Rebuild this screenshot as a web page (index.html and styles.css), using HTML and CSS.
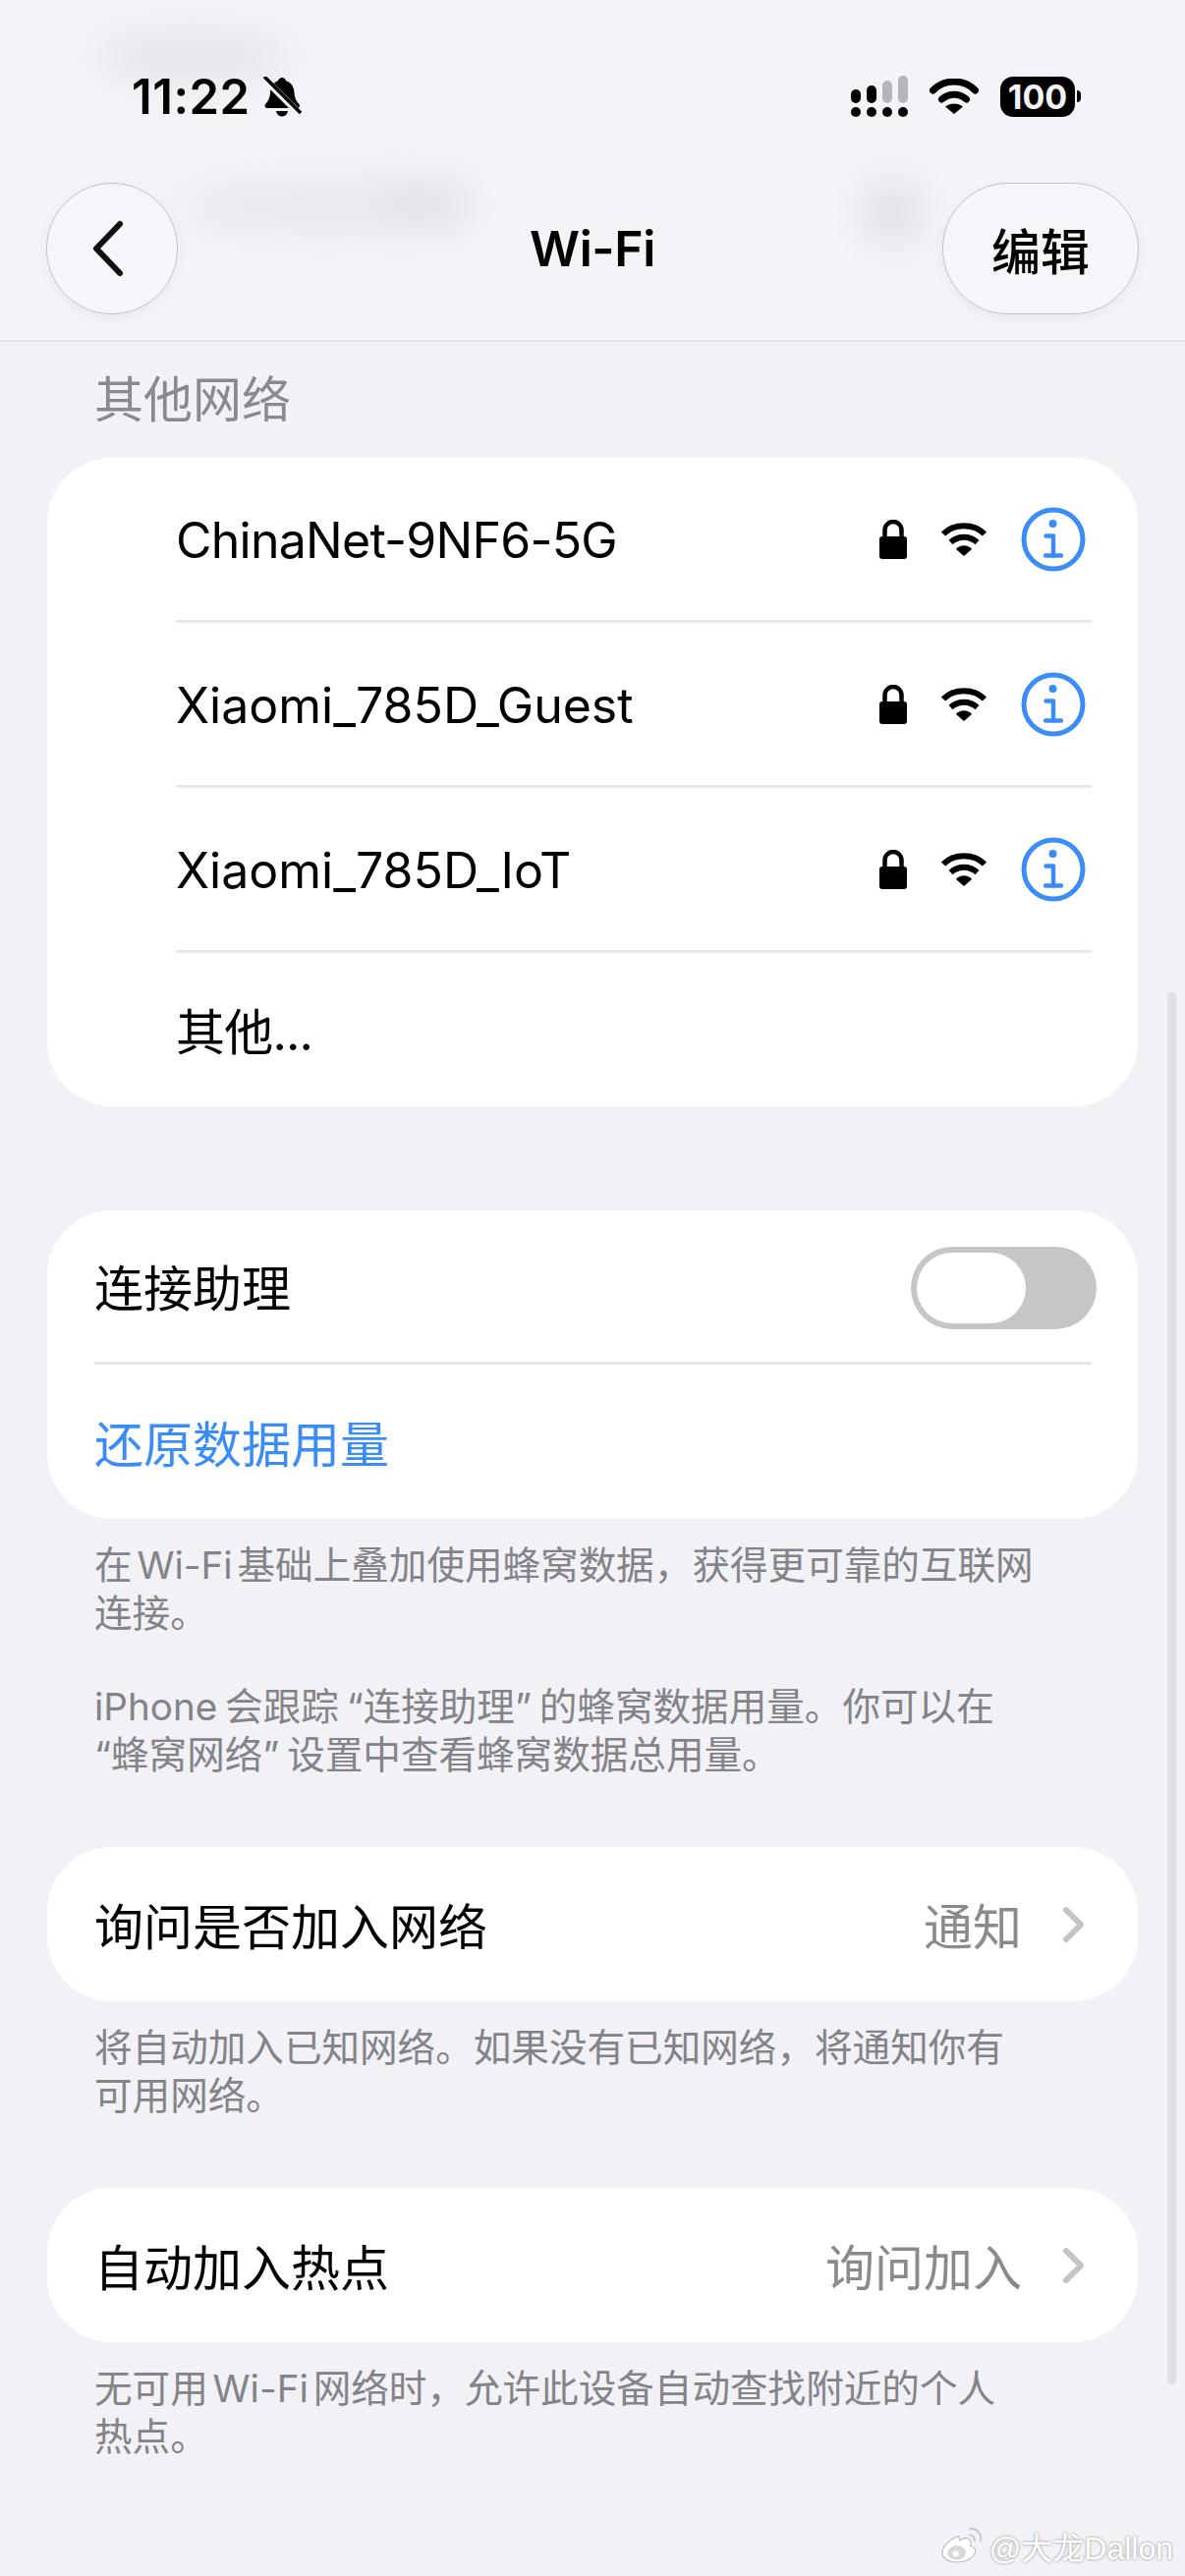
FILE: index.html
```html
<!DOCTYPE html>
<html lang="zh-CN">
<head>
    <meta charset="UTF-8">
    <meta name="viewport" content="width=device-width, initial-scale=1.0">
    <title>Wi-Fi</title>
    <link rel="stylesheet" href="styles.css">
</head>
<body>
    <div class="page">
        <header class="top-bar">
            <div class="blur blur-time"></div>
            <div class="blur blur-nav-a"></div>
            <div class="blur blur-nav-b"></div>
            <div class="blur blur-nav-c"></div>

            <div class="status-bar">
                <div class="status-left">
                    <span class="clock">11:22</span>
                    <svg class="bell" viewBox="0 0 40 42">
                        <path d="M20 1c2 0 3.500 1.300 4 3.200 5.500 1.600 8 6 8.500 12 .4 5 1.500 8 5 12 1 1.400.3 3.800-2 3.800H5c-2.300 0-3-2.400-2-3.800 3.500-4 4.600-7 5-12 .5-6 3-10.400 8-12 .5-1.900 2-3.200 4-3.200z"/>
                        <path d="M14 35h12c-.6 3.300-3 5.500-6 5.500s-5.400-2.200-6-5.500z"/>
                        <path class="bell-gap" d="M1 1l38 38"/>
                        <path class="bell-slash" d="M2 0l37 37"/>
                    </svg>
                </div>
                <div class="status-right">
                    <svg class="signal" viewBox="0 0 58 42">
                        <circle cx="5" cy="37" r="5"/><circle cx="21" cy="37" r="5"/><circle cx="37" cy="37" r="5"/><circle cx="53" cy="37" r="5"/>
                        <rect x="0" y="14" width="10" height="14" rx="5"/>
                        <rect x="16" y="10" width="10" height="18" rx="5"/>
                        <rect class="signal-off" x="32" y="5" width="10" height="23" rx="5"/>
                        <rect class="signal-off" x="48" y="0" width="10" height="28" rx="5"/>
                    </svg>
                    <svg class="wifi-status" viewBox="0 0 50 36">
                        <path d="M3.500 12C15 0 35 0 46.500 12" class="arc"/>
                        <path d="M12.500 21c7-6.500 18-6.500 25 0" class="arc"/>
                        <path d="M25 36l-9-7.500c5-4 13-4 18 0z"/>
                    </svg>
                    <div class="battery">
                        <span class="battery-level">100</span>
                        <span class="battery-tip"></span>
                    </div>
                </div>
            </div>

            <nav class="nav-bar">
                <button class="glass-btn back-btn">
                    <svg viewBox="0 0 36 58"><path d="M30 4L6 29l24 25"/></svg>
                </button>
                <h1 class="nav-title">Wi-Fi</h1>
                <button class="glass-btn edit-btn">编辑</button>
            </nav>
        </header>

        <main class="content">
            <h2 class="section-title">其他网络</h2>
            <section class="card">
                <div class="row net-row">
                    <span class="label label-tight">ChinaNet-9NF6-5G</span>
                    <svg class="lock" viewBox="0 0 28 40"><path d="M3 17h22a3 3 0 0 1 3 3v17a3 3 0 0 1-3 3H3a3 3 0 0 1-3-3V20a3 3 0 0 1 3-3z"/><path class="shackle" d="M5.500 18V10.500a8.500 8.500 0 0 1 17 0V18"/></svg>
                    <svg class="wifi" viewBox="0 0 48 36"><path class="arc" d="M3 12.500C14 1.500 34 1.500 45 12.500"/><path class="arc" d="M10.500 21c8-7 19-7 27 0"/><path d="M24 35l-8-7c4-5 12-5 16 0z"/></svg>
                    <svg class="info" viewBox="0 0 66 66"><circle class="info-ring" cx="33" cy="33" r="30"/><circle class="info-dot" cx="32.500" cy="17" r="4"/><path class="info-stem" d="M25.500 29.500h7.500v20M25 49.500h16"/></svg>
                </div>
                <div class="row net-row">
                    <span class="label">Xiaomi_785D_Guest</span>
                    <svg class="lock" viewBox="0 0 28 40"><path d="M3 17h22a3 3 0 0 1 3 3v17a3 3 0 0 1-3 3H3a3 3 0 0 1-3-3V20a3 3 0 0 1 3-3z"/><path class="shackle" d="M5.500 18V10.500a8.500 8.500 0 0 1 17 0V18"/></svg>
                    <svg class="wifi" viewBox="0 0 48 36"><path class="arc" d="M3 12.500C14 1.500 34 1.500 45 12.500"/><path class="arc" d="M10.500 21c8-7 19-7 27 0"/><path d="M24 35l-8-7c4-5 12-5 16 0z"/></svg>
                    <svg class="info" viewBox="0 0 66 66"><circle class="info-ring" cx="33" cy="33" r="30"/><circle class="info-dot" cx="32.500" cy="17" r="4"/><path class="info-stem" d="M25.500 29.500h7.500v20M25 49.500h16"/></svg>
                </div>
                <div class="row net-row">
                    <span class="label">Xiaomi_785D_IoT</span>
                    <svg class="lock" viewBox="0 0 28 40"><path d="M3 17h22a3 3 0 0 1 3 3v17a3 3 0 0 1-3 3H3a3 3 0 0 1-3-3V20a3 3 0 0 1 3-3z"/><path class="shackle" d="M5.500 18V10.500a8.500 8.500 0 0 1 17 0V18"/></svg>
                    <svg class="wifi" viewBox="0 0 48 36"><path class="arc" d="M3 12.500C14 1.500 34 1.500 45 12.500"/><path class="arc" d="M10.500 21c8-7 19-7 27 0"/><path d="M24 35l-8-7c4-5 12-5 16 0z"/></svg>
                    <svg class="info" viewBox="0 0 66 66"><circle class="info-ring" cx="33" cy="33" r="30"/><circle class="info-dot" cx="32.500" cy="17" r="4"/><path class="info-stem" d="M25.500 29.500h7.500v20M25 49.500h16"/></svg>
                </div>
                <div class="row net-row other-row">
                    <span class="label">其他...</span>
                </div>
            </section>

            <section class="card assist-card">
                <div class="row assist-row">
                    <span class="label">连接助理</span>
                    <div class="switch"><div class="knob"></div></div>
                </div>
                <div class="row link-row">
                    <span class="label link">还原数据用量</span>
                </div>
            </section>
            <div class="note-group">
                <p class="note">在 Wi-Fi 基础上叠加使用蜂窝数据，获得更可靠的互联网<br>连接。</p>
                <p class="note note-quoted">iPhone 会跟踪 “连接助理” 的蜂窝数据用量。你可以在<br>“蜂窝网络” 设置中查看蜂窝数据总用量。</p>
            </div>

            <section class="card single-card">
                <div class="row value-row">
                    <span class="label">询问是否加入网络</span>
                    <span class="value">通知</span>
                    <svg class="chevron" viewBox="0 0 22 36"><path d="M3 3l15 15L3 33"/></svg>
                </div>
            </section>
            <div class="note-group">
                <p class="note">将自动加入已知网络。如果没有已知网络，将通知你有<br>可用网络。</p>
            </div>

            <section class="card single-card">
                <div class="row value-row">
                    <span class="label">自动加入热点</span>
                    <span class="value">询问加入</span>
                    <svg class="chevron" viewBox="0 0 22 36"><path d="M3 3l15 15L3 33"/></svg>
                </div>
            </section>
            <div class="note-group">
                <p class="note">无可用 Wi-Fi 网络时，允许此设备自动查找附近的个人<br>热点。</p>
            </div>
        </main>

        <div class="scroll-thumb"></div>

        <div class="watermark">
            <svg class="weibo" viewBox="0 0 42 36">
                <path class="weibo-body" d="M17 9C8 13 1 20 2 26c1 6 9 9 17 8 8-1 15-5 15-11 0-3-3-4-5-5 1-3 1-5-1-6-2-2-6-1-9 1-1-2-1-5-2-4z"/>
                <ellipse class="weibo-eye" cx="16" cy="25" rx="9" ry="7"/>
                <circle class="weibo-pupil" cx="15" cy="26" r="3"/>
                <path class="weibo-wave" d="M28 8c3-1 6 2 5 6M28 2c7-2 13 5 11 12"/>
            </svg>
            <span>@大龙Dallon</span>
        </div>
    </div>
</body>
</html>
```

FILE: styles.css
```css
* {
    margin: 0;
    padding: 0;
    box-sizing: border-box;
}

body {
    width: 1206px;
    height: 2622px;
    overflow: hidden;
    background: #f1f1f6;
    font-family: Inter, "Noto Sans CJK SC", sans-serif;
    color: #000;
}

.page {
    position: relative;
    width: 1206px;
    height: 2622px;
    overflow: hidden;
}

/* top bar */
.top-bar {
    position: relative;
    height: 348px;
    padding-top: 70px;
    background: #f4f4f8;
    border-bottom: 2px solid #e6e6ea;
    overflow: hidden;
}

.blur {
    position: absolute;
    background: #d6d6da;
    border-radius: 50%;
    filter: blur(22px);
}

.blur-time { left: 96px; top: 40px; width: 200px; height: 36px; opacity: 0.7; }
.blur-nav-a { left: 180px; top: 188px; width: 300px; height: 42px; opacity: 0.5; }
.blur-nav-b { left: 880px; top: 188px; width: 56px; height: 56px; opacity: 0.85; }
.blur-nav-c { left: 390px; top: 184px; width: 90px; height: 46px; opacity: 0.45; }

.status-bar {
    position: relative;
    display: flex;
    justify-content: space-between;
    align-items: center;
    height: 56px;
    padding: 0 106px 0 134px;
}

.status-left {
    display: flex;
    align-items: center;
    gap: 12px;
}

.clock {
    font-size: 49px;
    font-weight: 600;
    letter-spacing: 0.5px;
}

.bell {
    width: 40px;
    height: 42px;
    margin-top: 2px;
}

.bell-gap {
    fill: none;
    stroke: #f4f4f8;
    stroke-width: 7;
}

.bell-slash {
    fill: none;
    stroke: #000;
    stroke-width: 3.500;
}

.status-right {
    display: flex;
    align-items: center;
    gap: 22px;
}

.signal {
    width: 58px;
    height: 42px;
}

.signal-off {
    fill: #b5b5ba;
}

.wifi-status {
    width: 50px;
    height: 36px;
}

.wifi-status .arc {
    fill: none;
    stroke: #000;
    stroke-width: 7;
    stroke-linecap: round;
}

.wifi .arc {
    fill: none;
    stroke: #000;
    stroke-width: 6;
}

.battery {
    display: flex;
    align-items: center;
    gap: 2px;
}

.battery-level {
    width: 76px;
    height: 41px;
    background: #000;
    border-radius: 13px;
    color: #f4f4f8;
    font-size: 34px;
    font-weight: 700;
    line-height: 41px;
    text-align: center;
}

.battery-tip {
    width: 4px;
    height: 12px;
    background: #000;
    border-radius: 0 4px 4px 0;
}

.nav-bar {
    position: relative;
    display: flex;
    justify-content: space-between;
    align-items: center;
    height: 134px;
    margin-top: 60px;
    padding: 0 47px 0 47px;
}

.glass-btn {
    height: 134px;
    background: #f6f6fa;
    border: 1.500px solid #c4c4c8;
    border-radius: 67px;
    box-shadow: 0 4px 14px rgba(0, 0, 0, 0.05);
    font-family: inherit;
    color: #000;
}

.back-btn {
    display: flex;
    align-items: center;
    justify-content: center;
    width: 134px;
}

.back-btn svg {
    width: 36px;
    height: 58px;
    fill: none;
    stroke: #111;
    stroke-width: 6;
    stroke-linecap: round;
    stroke-linejoin: round;
    margin-right: 8px;
}

.edit-btn {
    width: 200px;
    font-size: 50px;
    font-weight: 500;
}

.nav-title {
    position: absolute;
    left: 0;
    right: 0;
    text-align: center;
    font-size: 50px;
    font-weight: 600;
    letter-spacing: -0.4px;
    pointer-events: none;
}

/* content */
.content {
    padding: 0 48px;
}

.section-title {
    height: 118px;
    padding: 24px 48px 0;
    font-size: 50px;
    font-weight: 400;
    line-height: 70px;
    color: #8a8a8e;
}

.card {
    background: #fff;
    border-radius: 66px;
    overflow: hidden;
}

.row {
    display: flex;
    align-items: center;
    font-size: 50px;
}

.label {
    flex: 1;
    padding-bottom: 2px;
}

.net-row {
    height: 168px;
    margin-left: 131px;
    margin-right: 47px;
    padding-right: 6px;
    border-bottom: 3px solid #e7e7ea;
}

.net-row .label {
    padding-top: 3px;
    padding-bottom: 0;
}

.label-tight {
    letter-spacing: -0.75px;
}

.other-row {
    height: 156px;
    border-bottom: none;
}

.net-row.other-row .label {
    padding-top: 0;
    padding-bottom: 3px;
    letter-spacing: -0.8px;
}

.lock {
    width: 28px;
    height: 40px;
    margin-right: 34px;
}

.shackle {
    fill: none;
    stroke: #000;
    stroke-width: 4.500;
}

.wifi {
    width: 48px;
    height: 36px;
    margin-right: 34px;
}

.info {
    width: 66px;
    height: 66px;
}

.info-ring {
    fill: none;
    stroke: #3a8cf7;
    stroke-width: 5;
}

.info-dot {
    fill: #3a8cf7;
}

.info-stem {
    fill: none;
    stroke: #3a8cf7;
    stroke-width: 4.500;
    stroke-linecap: round;
    stroke-linejoin: round;
}

.assist-card {
    margin-top: 106px;
}

.assist-row {
    height: 157px;
    margin-left: 48px;
    margin-right: 47px;
    border-bottom: 3px solid #e7e7ea;
}

.switch {
    width: 189px;
    height: 84px;
    margin-top: 4px;
    margin-right: -5px;
    padding: 6px;
    background: #c6c6c8;
    border-radius: 42px;
}

.knob {
    width: 111px;
    height: 72px;
    background: #fff;
    border-radius: 36px;
}

.link-row {
    height: 157px;
    padding: 0 48px;
}

.link {
    color: #3a8cf7;
}

.note-group {
    display: flex;
    flex-direction: column;
    gap: 46px;
    padding: 23px 0 0 48px;
}

.note {
    font-size: 38.6px;
    line-height: 49px;
    word-spacing: -6px;
    color: #838388;
}

.note-quoted {
    word-spacing: -3px;
}

.single-card {
    margin-top: 69px;
}

.value-row {
    height: 157px;
    padding: 0 54px 0 48px;
}

.value {
    margin-right: 42px;
    padding-bottom: 2px;
    color: #8a8a8e;
}

.chevron {
    width: 22px;
    height: 36px;
    fill: none;
    stroke: #c4c4c7;
    stroke-width: 6;
    stroke-linecap: round;
    stroke-linejoin: round;
}

/* overlays */
.scroll-thumb {
    position: absolute;
    left: 1188px;
    top: 1009px;
    width: 9px;
    height: 1418px;
    background: #e0e0e5;
    border-radius: 5px;
}

.watermark {
    position: absolute;
    right: 12px;
    bottom: 8px;
    display: flex;
    align-items: center;
    gap: 6px;
    font-family: "Liberation Sans", "Noto Sans CJK SC", sans-serif;
    font-size: 32px;
    color: #fff;
    text-shadow: 0 0 3px rgba(0, 0, 0, 0.45);
}

.weibo {
    width: 44px;
    height: 38px;
}

.weibo-body { fill: #fff; stroke: #b8b8bc; stroke-width: 1; }
.weibo-eye { fill: #d8d8dc; }
.weibo-pupil { fill: #fff; }
.weibo-wave { fill: none; stroke: #c8c8cc; stroke-width: 2; }
```
